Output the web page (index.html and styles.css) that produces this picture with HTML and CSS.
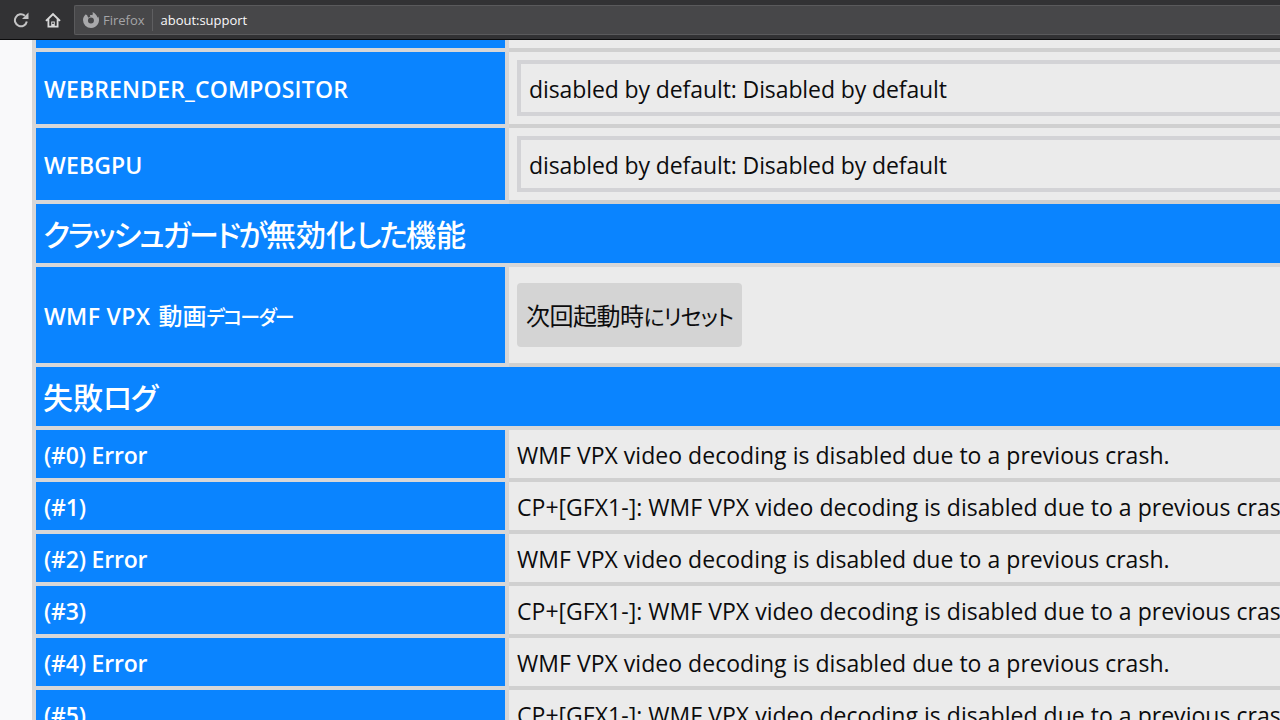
FILE: index.html
```html
<!DOCTYPE html>
<html lang="ja">
<head>
<meta charset="utf-8">
<title>about:support</title>
<link rel="stylesheet" href="styles.css">
</head>
<body>
<header class="toolbar">
  <svg class="tool-icon reload" viewBox="0 0 16 16"><path d="M13.800 9.500A6 6 0 1 1 11.900 3.800" fill="none" stroke="#c4c4c5" stroke-width="2"/><path d="M15.500 .6v6.400H9z" fill="#c4c4c5"/></svg>
  <svg class="tool-icon home" viewBox="0 0 16 16"><path fill-rule="evenodd" d="M8 .8 .3 8.200l1.300 1.300L2.500 8.700V15.500h11V8.700l.9.8 1.300-1.300zM4.300 13.800V7L8 3.400 11.700 7v6.800H9.800V9.500H6.200v4.300zM7.200 10.500h1.600v1.600H7.200z" fill="#d8d8d8"/></svg>
  <div class="urlbar">
    <svg class="fx-icon" viewBox="0 0 16 16"><path fill-rule="evenodd" d="M8 16A8 8 0 0 0 15.200 4.500L14.600 5.800C14 3.500 12 1.200 9.500 0c.5 1.300.4 2.500-.3 3.300C8.400 3 7.500 3.100 6.800 3.400c.5.300.7.800.5 1.200-.2.500-1 .6-1.700 1.100-.4-.5-.9-.9-1.300-2.300C3.300 2.300 3 3.800 3.200 1.900 1.200 3.400 0 5.600 0 8a8 8 0 0 0 8 8zM8 5.500a3 3 0 1 1-.1 6 3 3 0 0 1 .1-6z" fill="#a9a9ab"/></svg>
    <span class="identity">Firefox</span>
    <span class="divider"></span>
    <span class="address">about:support</span>
  </div>
</header>
<main class="page">
  <table class="support">
    <colgroup><col class="col-label"><col class="col-value"></colgroup>
    <tbody>
      <tr class="stub"><th></th><td></td></tr>
      <tr class="tall"><th>WEBRENDER_COMPOSITOR</th><td><div class="note">disabled by default: Disabled by default</div></td></tr>
      <tr class="tall"><th>WEBGPU</th><td><div class="note">disabled by default: Disabled by default</div></td></tr>
      <tr class="section"><th colspan="2"><span class="kana">クラッシュガードが</span>無効化<span class="kana">した</span>機能</th></tr>
      <tr class="guard"><th><span class="latin">WMF VPX</span> <span class="cjk-inline">動画<span class="kana-small">デコーダー</span></span></th><td><button class="reset" type="button"><span class="kanji-tight">次回起動時</span><span class="kana-button">にリセット</span></button></td></tr>
      <tr class="section"><th colspan="2">失敗<span class="kana-loose">ログ</span></th></tr>
      <tr class="log"><th>(#0) Error</th><td>WMF VPX video decoding is disabled due to a previous crash.</td></tr>
      <tr class="log"><th>(#1)</th><td>CP+[GFX1-]: WMF VPX video decoding is disabled due to a previous crash.</td></tr>
      <tr class="log"><th>(#2) Error</th><td>WMF VPX video decoding is disabled due to a previous crash.</td></tr>
      <tr class="log"><th>(#3)</th><td>CP+[GFX1-]: WMF VPX video decoding is disabled due to a previous crash.</td></tr>
      <tr class="log"><th>(#4) Error</th><td>WMF VPX video decoding is disabled due to a previous crash.</td></tr>
      <tr class="log"><th>(#5)</th><td>CP+[GFX1-]: WMF VPX video decoding is disabled due to a previous crash.</td></tr>
    </tbody>
  </table>
</main>
</body>
</html>
```
FILE: styles.css
```css
* { box-sizing: border-box; }
html, body { margin: 0; height: 720px; overflow: hidden; background: #f9f9fa; }
body { font-family: "Open Sans", "Noto Sans CJK JP", sans-serif; }
.toolbar { height: 40px; background: #323234; border-bottom: 1px solid #0c0c0d; display: flex; align-items: center; padding-left: 13px; }
.tool-icon { flex: none; }
.reload { width: 16px; height: 16px; margin-right: 16px; }
.home { width: 16px; height: 16px; margin-right: 13px; }
.urlbar { flex: 1; height: 30px; background: #474749; border: 1px solid #5a5a5c; border-right: 0; border-radius: 2px 0 0 2px; display: flex; align-items: center; padding-left: 8px; font-size: 13px; }
.fx-icon { width: 16px; height: 16px; flex: none; }
.identity { color: #a5a5a8; margin-left: 4px; }
.divider { width: 1px; height: 22px; background: #5f5f61; margin: 0 8px 0 7px; }
.address { color: #f9f9fa; font-weight: 500; letter-spacing: -.03px; }
.page { height: 680px; overflow: hidden; padding-left: 32px; }
.support { border-collapse: separate; border-spacing: 4px; margin-top: -4px; background: #d7d7d8; table-layout: fixed; width: 1500px; font-size: 23px; }
.col-label { width: 469px; }
.support th { background: #0a84ff; color: #fff; text-align: left; font-weight: 600; padding: 2px 8px 0; }
.support td { background: #ebebeb; color: #0c0c0d; padding: 2px 8px 0; white-space: nowrap; box-shadow: 0 4px 0 #d0d0d0; letter-spacing: .03px; }
.stub { height: 8px; }
.support .stub th, .support .stub td { padding: 0; }
.tall { height: 72px; }
.tall th { letter-spacing: .15px; }
.guard { height: 96px; }
.log { height: 48px; }
.log th { letter-spacing: -.2px; }
.section { height: 59px; }
.support .section th { font-size: 30px; font-weight: 500; padding: 0 7px 1px; font-feature-settings: "palt"; }
.kana { letter-spacing: -2px; }
.kana-loose { letter-spacing: -1.5px; }
.latin { letter-spacing: .35px; margin-right: 2px; }
.cjk-inline { font-size: 24px; line-height: 1; font-weight: 500; font-feature-settings: "palt"; }
.kana-small { font-size: 20px; letter-spacing: -1.8px; }
.support td .note { border: 4px solid #d3d3d6; height: 56px; margin-top: -2px; display: flex; align-items: center; padding: 2px 0 0 8px; letter-spacing: -.1px; }
.support td:has(.reset) { padding-top: 0; }
.reset { display: block; font: inherit; font-size: 24px; font-feature-settings: "palt"; color: #0c0c0d; background: #d4d4d4; border: 0; border-radius: 4px; height: 64px; padding: 0 9px 2px; }
.kanji-tight { letter-spacing: -.5px; }
.kana-button { font-size: 22px; letter-spacing: -1px; }
```
